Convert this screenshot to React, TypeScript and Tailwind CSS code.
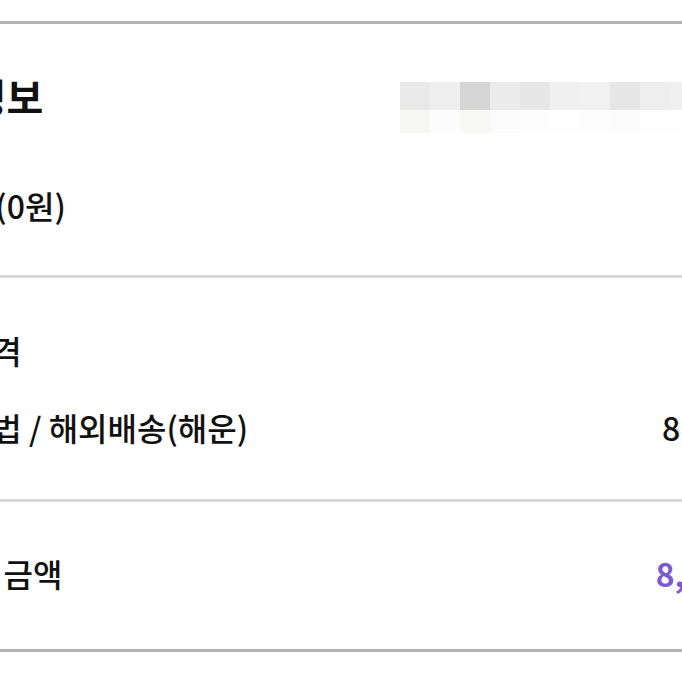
import React from 'react';

const mosaicTop = [
  '#e9e9e9', '#efefef', '#d6d6d6', '#ececec', '#e7e7e7', '#f0f0f0',
  '#f1f1f1', '#e6e6e6', '#eeeeee', '#f0f0f0', '#ececec', '#efefef',
];
const mosaicBottom = [
  '#f6f6f2', '#fcfcfc', '#f8f8f5', '#fbfbfb', '#fdfdfd', '#fefefe',
  '#fdfdfd', '#fcfcfc', '#fefefe', '#fefefe', '#fdfdfd', '#fefefe',
];

function Mosaic() {
  return (
    <div className="mt-[8px] flex w-[374px] flex-col">
      <div className="flex h-[28px]">
        {mosaicTop.map((c, i) => (
          <div key={i} className="h-full w-[30px] shrink-0" style={{ backgroundColor: c }} />
        ))}
      </div>
      <div className="flex h-[23px]">
        {mosaicBottom.map((c, i) => (
          <div key={i} className="h-full w-[30px] shrink-0" style={{ backgroundColor: c }} />
        ))}
      </div>
    </div>
  );
}

export default function App() {
  return (
    <div
      className="h-[682px] w-[682px] overflow-hidden bg-white text-[#111]"
      style={{ fontFamily: '"Noto Sans CJK KR", "Noto Sans", sans-serif' }}
    >
      <div className="h-[21px]" />
      <div className="h-[3px] bg-[#b3b3b3]" />

      <div className="-ml-[96px] w-[870px]">
        {/* 결제 정보 */}
        <div className="pt-[50px] pb-[50px]">
          <div className="flex items-start justify-between">
            <h2 className="-ml-[8px] h-[44px] text-[40px] font-bold leading-[44px]">결제정보</h2>
            <Mosaic />
          </div>
          <div className="mt-[52px] ml-[3px] h-[40px] text-[32px] font-medium leading-[40px]">포인트(0원)</div>
        </div>
      </div>
      <div className="h-[3px] bg-[#d7d7d7]" />

      <div className="-ml-[96px] w-[870px] font-medium">
        <div className="pt-[52px] pb-[52px]">
          <div className="h-[40px] text-[32px] leading-[40px]">상품가격</div>
          <div className="mt-[37px] flex h-[40px] items-center justify-between text-[32px] leading-[40px]">
            <span>배송방법 / 해외배송(해운)</span>
            <span>8,000원</span>
          </div>
        </div>
      </div>
      <div className="h-[3px] bg-[#d7d7d7]" />

      <div className="-ml-[96px] w-[870px]">
        <div className="flex h-[147px] items-center justify-between pb-[6px] text-[32px]">
          <span className="ml-[4px] font-medium">총결제 금액</span>
          <span className="mr-[3px] font-bold text-[#7b5bcf]">8,000원</span>
        </div>
      </div>
      <div className="h-[3px] bg-[#b3b3b3]" />
    </div>
  );
}
